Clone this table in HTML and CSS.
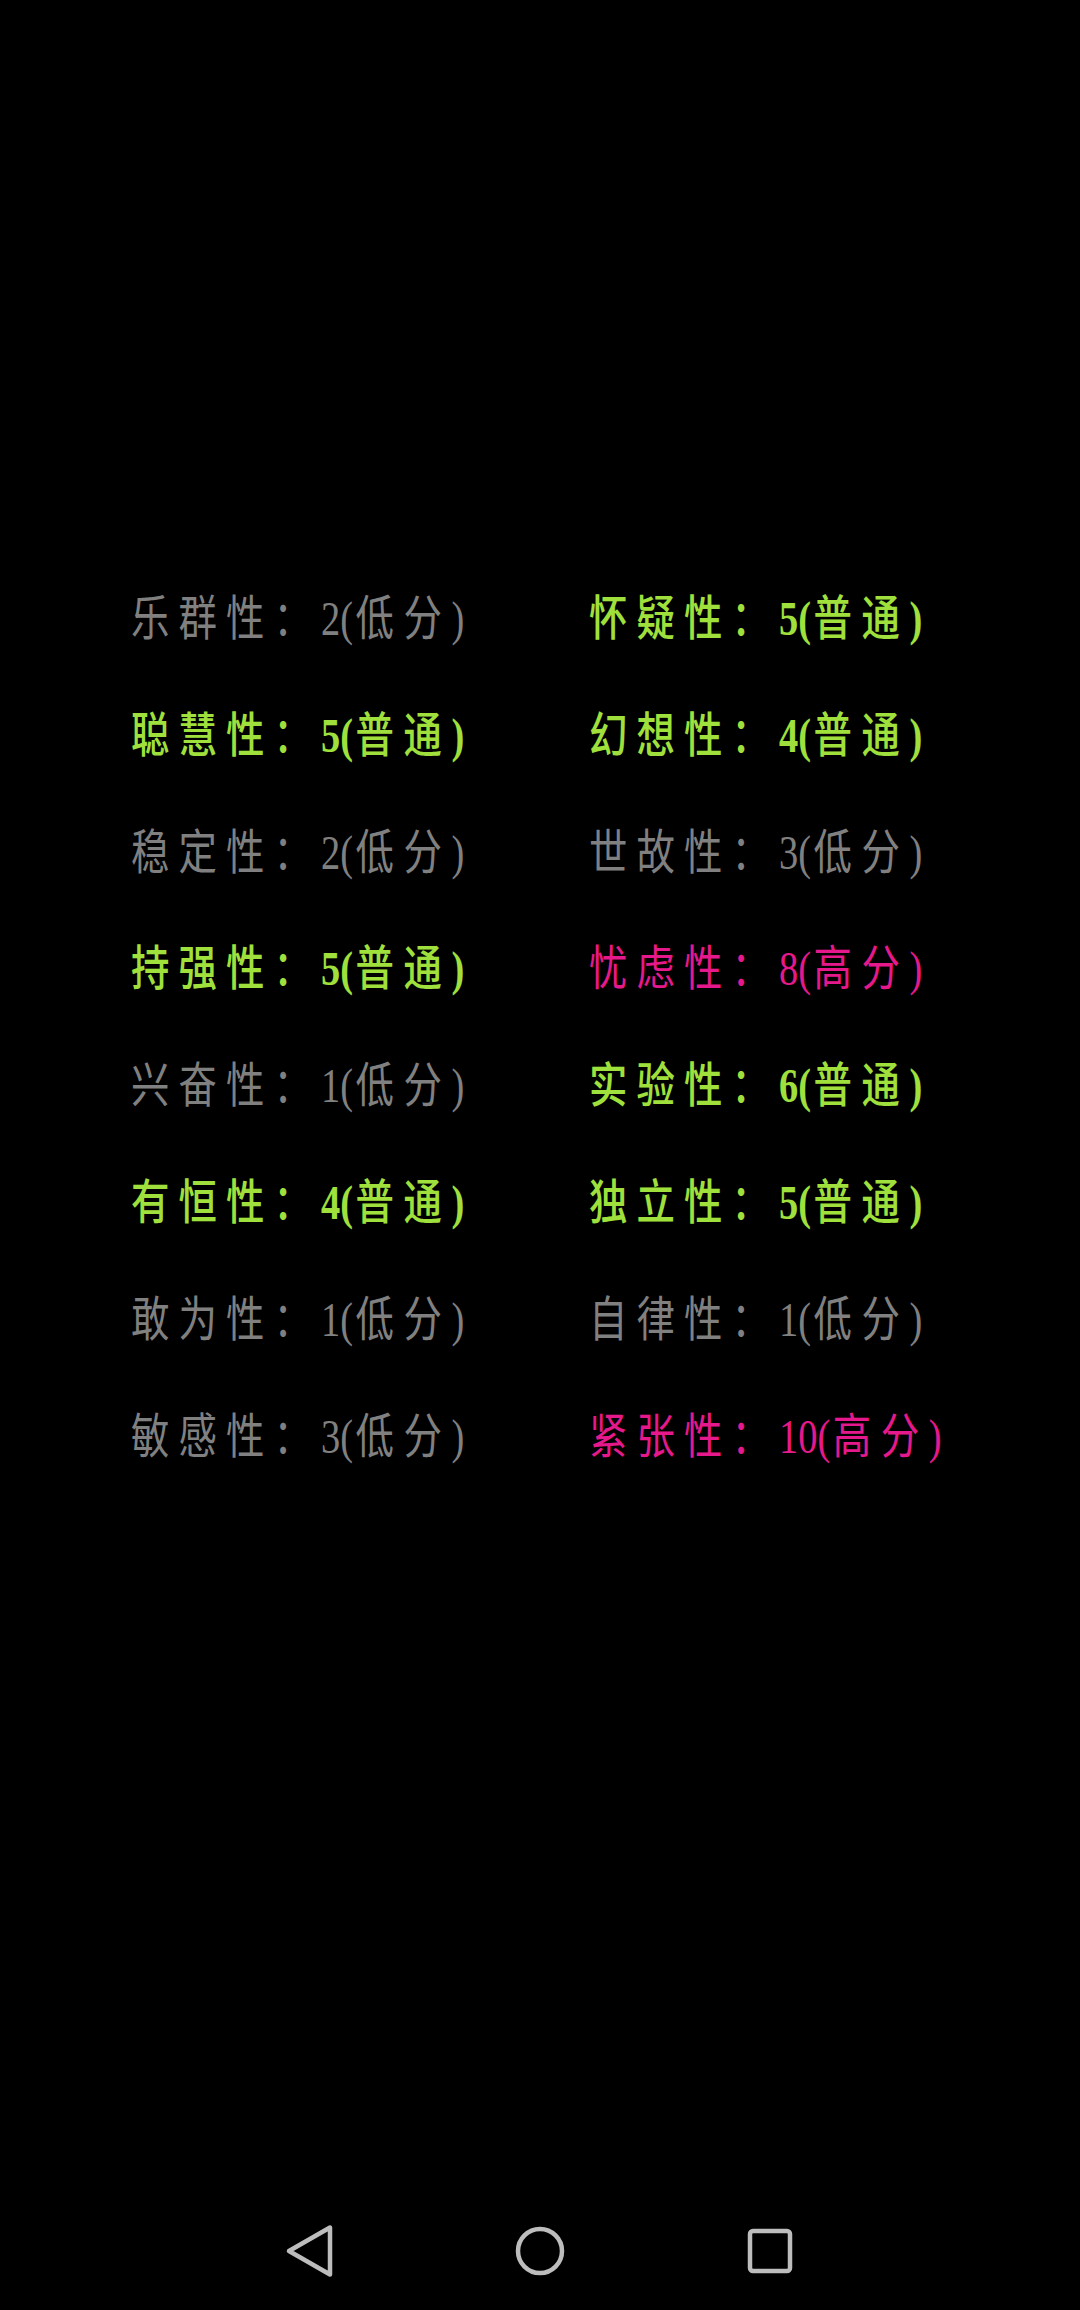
FILE: index.html
```html
<!DOCTYPE html>
<html lang="zh-CN">
<head>
<meta charset="utf-8">
<title>性格测试结果</title>
<link rel="stylesheet" href="styles.css">
</head>
<body>
<main class="screen">
  <div class="grid">
    <div class="item low"><span class="lbl">乐群性：</span><span class="val">2(<span class="w">低分</span>)</span></div>
    <div class="item mid"><span class="lbl">怀疑性：</span><span class="val">5(<span class="w">普通</span>)</span></div>
    <div class="item mid"><span class="lbl">聪慧性：</span><span class="val">5(<span class="w">普通</span>)</span></div>
    <div class="item mid"><span class="lbl">幻想性：</span><span class="val">4(<span class="w">普通</span>)</span></div>
    <div class="item low"><span class="lbl">稳定性：</span><span class="val">2(<span class="w">低分</span>)</span></div>
    <div class="item low"><span class="lbl">世故性：</span><span class="val">3(<span class="w">低分</span>)</span></div>
    <div class="item mid"><span class="lbl">持强性：</span><span class="val">5(<span class="w">普通</span>)</span></div>
    <div class="item high"><span class="lbl">忧虑性：</span><span class="val">8(<span class="w">高分</span>)</span></div>
    <div class="item low"><span class="lbl">兴奋性：</span><span class="val">1(<span class="w">低分</span>)</span></div>
    <div class="item mid"><span class="lbl">实验性：</span><span class="val">6(<span class="w">普通</span>)</span></div>
    <div class="item mid"><span class="lbl">有恒性：</span><span class="val">4(<span class="w">普通</span>)</span></div>
    <div class="item mid"><span class="lbl">独立性：</span><span class="val">5(<span class="w">普通</span>)</span></div>
    <div class="item low"><span class="lbl">敢为性：</span><span class="val">1(<span class="w">低分</span>)</span></div>
    <div class="item low"><span class="lbl">自律性：</span><span class="val">1(<span class="w">低分</span>)</span></div>
    <div class="item low"><span class="lbl">敏感性：</span><span class="val">3(<span class="w">低分</span>)</span></div>
    <div class="item high"><span class="lbl">紧张性：</span><span class="val">10(<span class="w">高分</span>)</span></div>
  </div>
</main>
<nav class="navbar">
  <div class="nav-btn">
    <svg width="60" height="60" viewBox="0 0 60 60"><path d="M9 30 L50 6.5 L50 53.5 Z" fill="none" stroke="#bdbdbd" stroke-width="4.5" stroke-linejoin="round"/></svg>
  </div>
  <div class="nav-btn">
    <svg width="60" height="60" viewBox="0 0 60 60"><circle cx="30" cy="30" r="22" fill="none" stroke="#bdbdbd" stroke-width="4.5"/></svg>
  </div>
  <div class="nav-btn">
    <svg width="60" height="60" viewBox="0 0 60 60"><rect x="10" y="10" width="40" height="40" rx="3" fill="none" stroke="#bdbdbd" stroke-width="4.5"/></svg>
  </div>
</nav>
</body>
</html>
```
FILE: styles.css
```css
html, body {
  margin: 0;
  padding: 0;
  background: #000;
}
body {
  width: 1080px;
  height: 2310px;
  display: flex;
  flex-direction: column;
  overflow: hidden;
}
.screen {
  flex: 1;
  padding-top: 589px;
}
.grid {
  display: grid;
  grid-template-columns: 458px 1fr;
  row-gap: 56.8px;
  padding-left: 131px;
}
.item {
  height: 60px;
  line-height: 60px;
  font-family: "Liberation Serif", "Noto Sans CJK SC", serif;
  font-size: 48px;
  white-space: nowrap;
  transform: scaleX(0.8);
  transform-origin: left center;
}
.lbl {
  letter-spacing: 11.4px;
}
.val .w {
  letter-spacing: 12px;
  margin-left: 3px;
}
.low {
  color: #808080;
  font-weight: 400;
}
.mid {
  color: #a0e03c;
  font-weight: 500;
}
.mid .val {
  font-weight: 700;
}
.mid .val .w {
  font-weight: 500;
}
.high {
  color: #e6198c;
  font-weight: 400;
}
.navbar {
  height: 118px;
  display: flex;
  justify-content: center;
  align-items: center;
  gap: 170px;
}
.nav-btn {
  width: 60px;
  height: 60px;
}
.nav-btn svg {
  display: block;
}
```
